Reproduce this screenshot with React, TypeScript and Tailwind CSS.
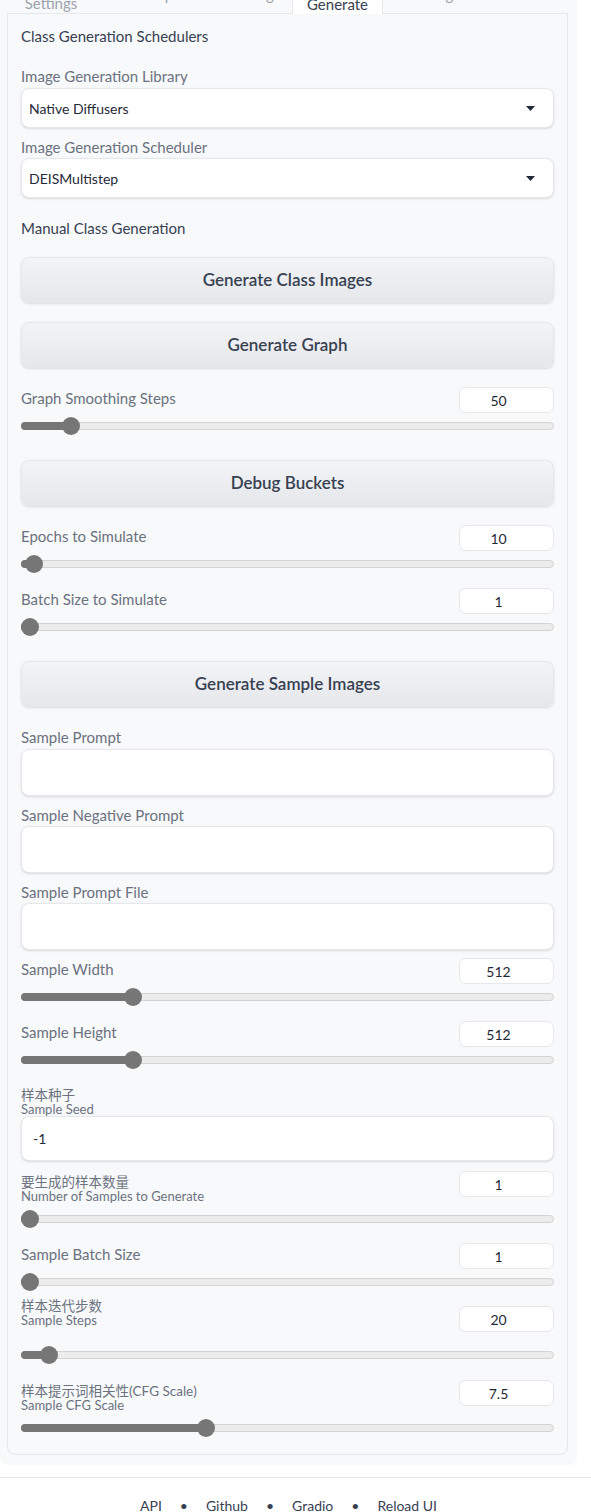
import React from "react";

const FONT = "font-['Lato','Noto_Sans_CJK_SC',sans-serif]";

function Label({ text }: { text: string }) {
  return <div className="text-[15px] leading-[20px] text-[#6b7280]">{text}</div>;
}

function Dropdown({ value }: { value: string }) {
  return (
    <div className="flex h-[40px] items-center justify-between rounded-[8px] border border-[#e5e7eb] bg-white pl-[7px] pr-[18px] shadow-sm">
      <span className="text-[14px] text-[#1f2937]">{value}</span>
      <svg width="9" height="5" viewBox="0 0 9 5">
        <path d="M0 0 L9 0 L4.5 5 Z" fill="#1f2937" />
      </svg>
    </div>
  );
}

function Button({ text, mt }: { text: string; mt: string }) {
  return (
    <div
      className={`${mt} flex h-[46px] items-center justify-center rounded-[8px] border border-[#e5e7eb] bg-gradient-to-b from-[#f3f4f6] to-[#e5e7eb] text-[17px] font-semibold text-[#374151] shadow-sm`}
    >
      {text}
    </div>
  );
}

function Slider({
  label,
  sub,
  value,
  pos,
  mt,
  lift,
}: {
  label: string;
  sub?: string;
  value: string;
  pos: number;
  mt: string;
  lift?: boolean;
}) {
  let trackMt = "mt-[4px]";
  if (sub) trackMt = lift ? "mt-[14px]" : "mt-[7px]";
  return (
    <div className={mt}>
      <div className="flex items-start justify-between">
        {sub ? (
          <div className={lift ? "-mt-[8px]" : "pt-[3px]"}>
            <div className="text-[13.5px] leading-[16px] text-[#6b7280]">{label}</div>
            <div className="text-[13px] leading-[13px] text-[#6b7280]">{sub}</div>
          </div>
        ) : (
          <div className="pt-[1px] text-[15px] leading-[20px] text-[#6b7280]">{label}</div>
        )}
        <div className="flex h-[26px] w-[95px] items-center justify-center rounded-[7px] border border-[#e5e7eb] bg-white pr-[16px] text-[14px] text-[#1f2937]">
          {value}
        </div>
      </div>
      <div className={`relative h-[18px] ${trackMt}`}>
        <div className="absolute left-0 right-0 top-[5px] h-[8px] rounded-full border border-[#d4d4d4] bg-[#ececec]" />
        <div
          className="absolute left-0 top-[5px] h-[8px] rounded-full bg-[#767676]"
          style={{ width: pos }}
        />
        <div
          className="absolute top-0 h-[18px] w-[18px] rounded-full bg-[#767676]"
          style={{ left: pos - 9 }}
        />
      </div>
    </div>
  );
}

function TextBox({ h, value, mt }: { h: string; value?: string; mt: string }) {
  return (
    <div
      className={`${mt} ${h} flex items-center rounded-[8px] border border-[#e5e7eb] bg-white px-[11px] text-[14px] text-[#1f2937] shadow-sm`}
    >
      {value}
    </div>
  );
}

const tabs = [
  { name: "Settings", w: "w-[88px]", pt: "pt-[14px]" },
  { name: "Concepts", w: "w-[118px]", pt: "pt-[5px]" },
  { name: "Saving", w: "w-[79px]", pt: "pt-[5px]" },
  { name: "Generate", w: "w-[91px]", pt: "pt-[14px]", active: true },
  { name: "Testing", w: "w-[94px]", pt: "pt-[5px]" },
];

export default function App() {
  return (
    <div className={`${FONT} h-[1512px] w-[591px] overflow-hidden bg-white`}>
      <div className="w-[577px] rounded-b-[8px] bg-[#f8f9fa] pb-[10px]">
        <div className="-mt-[21px] flex h-[34px] pl-[7px]">
          {tabs.map((t) =>
            t.active ? (
              <div
                key={t.name}
                className={`${t.w} ${t.pt} relative z-10 h-[35px] rounded-t-[6px] border-x border-t border-[#e5e7eb] bg-white text-center text-[15px] leading-[20px] text-[#374151]`}
              >
                {t.name}
              </div>
            ) : (
              <div
                key={t.name}
                className={`${t.w} ${t.pt} h-[34px] text-center text-[15px] leading-[20px] text-[#9ca3af]`}
              >
                {t.name}
              </div>
            )
          )}
        </div>

        <div className="ml-[7px] flex w-[561px] flex-col rounded-b-[8px] border border-[#e5e7eb] px-[13px] pb-[17px] pt-[12px]">
          <div className="text-[15px] leading-[20px] text-[#374151]">Class Generation Schedulers</div>

          <div className="mt-[20px]">
            <Label text="Image Generation Library" />
          </div>
          <div className="mt-[2px]">
            <Dropdown value="Native Diffusers" />
          </div>
          <div className="mt-[9px]">
            <Label text="Image Generation Scheduler" />
          </div>
          <div className="mt-[1px]">
            <Dropdown value="DEISMultistep" />
          </div>

          <div className="mt-[20px] text-[15px] leading-[20px] text-[#374151]">Manual Class Generation</div>

          <Button text="Generate Class Images" mt="mt-[19px]" />
          <Button text="Generate Graph" mt="mt-[19px]" />
          <Slider label="Graph Smoothing Steps" value="50" pos={50} mt="mt-[19px]" />

          <Button text="Debug Buckets" mt="mt-[25px]" />
          <Slider label="Epochs to Simulate" value="10" pos={13} mt="mt-[19px]" />
          <Slider label="Batch Size to Simulate" value="1" pos={9} mt="mt-[15px]" />

          <Button text="Generate Sample Images" mt="mt-[25px]" />

          <div className="mt-[20px]">
            <Label text="Sample Prompt" />
          </div>
          <TextBox h="h-[47px]" mt="mt-[2px]" />
          <div className="mt-[9px]">
            <Label text="Sample Negative Prompt" />
          </div>
          <TextBox h="h-[47px]" mt="mt-[1px]" />
          <div className="mt-[9px]">
            <Label text="Sample Prompt File" />
          </div>
          <TextBox h="h-[47px]" mt="mt-[1px]" />

          <Slider label="Sample Width" value="512" pos={112} mt="mt-[8px]" />
          <Slider label="Sample Height" value="512" pos={112} mt="mt-[15px]" />

          <div className="mt-[18px]">
            <div className="text-[13.5px] leading-[16px] text-[#6b7280]">样本种子</div>
            <div className="text-[13px] leading-[13px] text-[#6b7280]">Sample Seed</div>
          </div>
          <TextBox h="h-[45px]" value="-1" mt="mt-0" />

          <Slider
            label="要生成的样本数量"
            sub="Number of Samples to Generate"
            value="1"
            pos={9}
            mt="mt-[10px]"
          />
          <Slider label="Sample Batch Size" value="1" pos={9} mt="mt-[15px]" />
          <Slider label="样本迭代步数" sub="Sample Steps" value="20" pos={28} mt="mt-[15px]" lift />
          <Slider
            label="样本提示词相关性(CFG Scale)"
            sub="Sample CFG Scale"
            value="7.5"
            pos={185}
            mt="mt-[16px]"
          />
        </div>
      </div>

      <div className="mt-[12px] border-t border-[#e5e7eb]">
        <div className="flex w-[577px] justify-center pt-[18px] text-[14px] leading-[20px] text-[#374151]">
          <span>API</span>
          <span className="mx-[18px]">•</span>
          <span>Github</span>
          <span className="mx-[18px]">•</span>
          <span>Gradio</span>
          <span className="mx-[18px]">•</span>
          <span>Reload UI</span>
        </div>
      </div>
    </div>
  );
}
